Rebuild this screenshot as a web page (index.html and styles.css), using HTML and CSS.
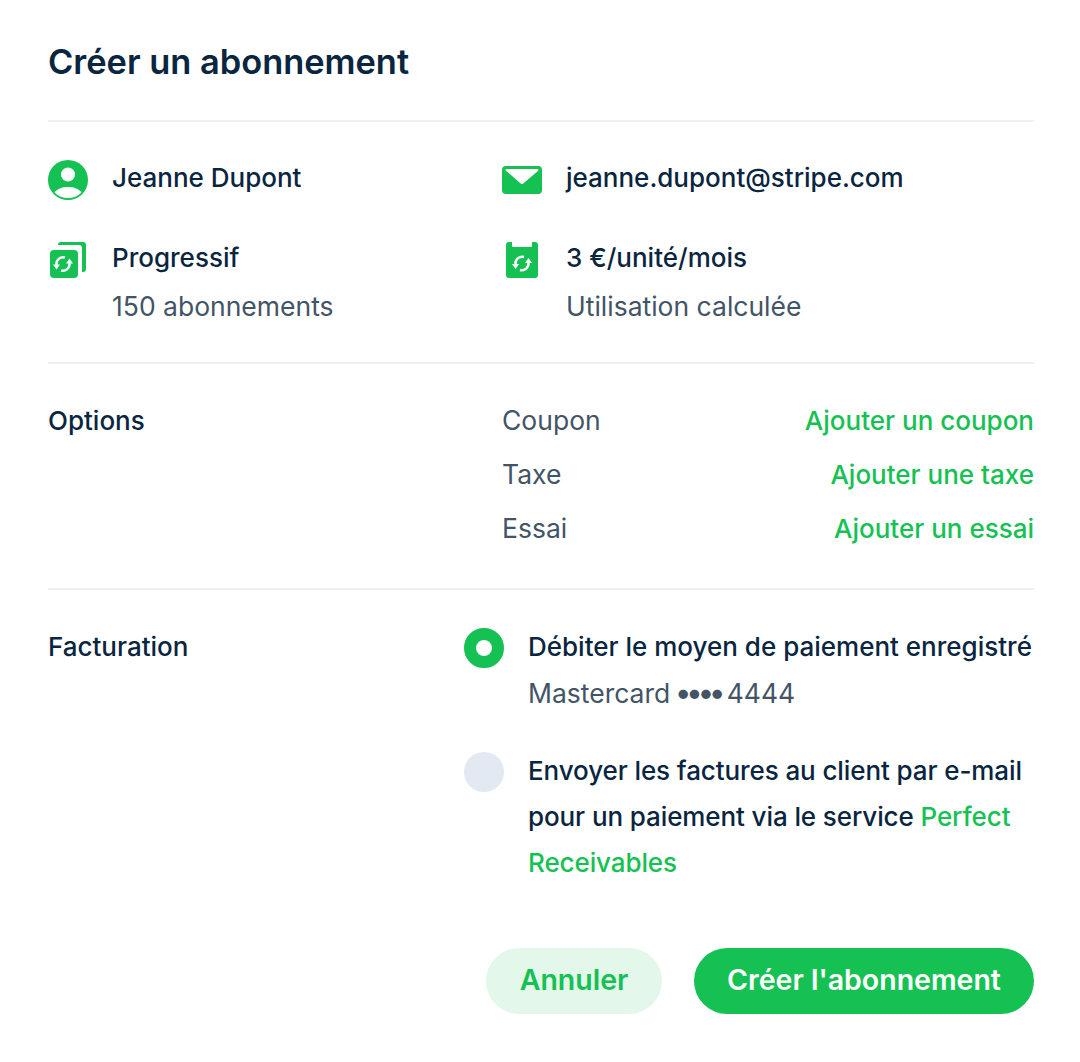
FILE: index.html
```html
<!DOCTYPE html>
<html lang="fr">
<head>
  <meta charset="UTF-8">
  <meta name="viewport" content="width=device-width, initial-scale=1.0">
  <title>Créer un abonnement</title>
  <link rel="stylesheet" href="styles.css">
</head>
<body>
  <div class="panel">
    <h1 class="panel-title">Créer un abonnement</h1>

    <!-- client et tarif -->
    <section class="section details">
      <div class="detail">
        <svg class="icon" width="40" height="40" viewBox="0 0 40 40">
          <circle cx="20" cy="20" r="20" fill="#16c153"/>
          <circle cx="20" cy="14.500" r="7" fill="#fff"/>
          <path d="M6.500 32.500C9 29 14 27 20 27s11 2 13.500 5.500C30 36.300 25 38 20 38S10 36.300 6.500 32.500Z" fill="#fff"/>
        </svg>
        <p class="strong">Jeanne Dupont</p>
      </div>
      <div class="detail">
        <svg class="icon" width="40" height="40" viewBox="0 0 40 40">
          <path d="M4 6h32a4 4 0 0 1 4 4v20a4 4 0 0 1-4 4H4a4 4 0 0 1-4-4V10a4 4 0 0 1 4-4Z" fill="#16c153"/>
          <path d="M4.500 9h31a1 1 0 0 1 .7 1.700L21.300 23.500a2 2 0 0 1-2.600 0L3.800 10.700A1 1 0 0 1 4.500 9Z" fill="#fff"/>
        </svg>
        <p class="strong">jeanne.dupont@stripe.com</p>
      </div>
      <div class="detail">
        <svg class="icon" width="40" height="40" viewBox="0 0 40 40">
          <path d="M10 5a3 3 0 0 1 3-3h22a3 3 0 0 1 3 3v24a3 3 0 0 1-3 3h-1V8a3 3 0 0 0-3-3Z" fill="#16c153"/>
          <rect x="2" y="10" width="28" height="28" rx="4" fill="#16c153"/>
          <g transform="translate(15 24)" fill="#fff">
            <path d="M2-6.500A6.800 6.800 0 0 0-6.500 1M-2 6.500A6.800 6.800 0 0 0 6.500-1" fill="none" stroke="#fff" stroke-width="2.400"/>
            <path d="M-10 .5h7l-3.500 5ZM10-.5H3l3.500-5Z"/>
          </g>
        </svg>
        <div>
          <p class="strong">Progressif</p>
          <p class="muted sub">150 abonnements</p>
        </div>
      </div>
      <div class="detail">
        <svg class="icon" width="40" height="40" viewBox="0 0 40 40">
          <path d="M7 2h3v4a1 1 0 0 0 1 1h18a1 1 0 0 0 1-1V2h3a3 3 0 0 1 3 3v30a3 3 0 0 1-3 3H7a3 3 0 0 1-3-3V5a3 3 0 0 1 3-3Z" fill="#16c153"/>
          <g transform="translate(20 23.500)" fill="#fff">
            <path d="M2-6.500A6.800 6.800 0 0 0-6.500 1M-2 6.500A6.800 6.800 0 0 0 6.500-1" fill="none" stroke="#fff" stroke-width="2.400"/>
            <path d="M-10 .5h7l-3.500 5ZM10-.5H3l3.500-5Z"/>
          </g>
        </svg>
        <div>
          <p class="strong">3 €/unité/mois</p>
          <p class="muted sub">Utilisation calculée</p>
        </div>
      </div>
    </section>

    <section class="section options">
      <p class="strong">Options</p>
      <div class="option-list">
        <div class="option"><span class="muted">Coupon</span><a class="link" href="#">Ajouter un coupon</a></div>
        <div class="option"><span class="muted">Taxe</span><a class="link" href="#">Ajouter une taxe</a></div>
        <div class="option"><span class="muted">Essai</span><a class="link" href="#">Ajouter un essai</a></div>
      </div>
    </section>

    <section class="section billing">
      <p class="strong">Facturation</p>
      <div class="choices">
        <div class="choice">
          <span class="radio radio-on"></span>
          <div>
            <p class="strong">Débiter le moyen de paiement enregistré</p>
            <p class="muted">Mastercard <span class="dots">••••</span> 4444</p>
          </div>
        </div>
        <div class="choice">
          <span class="radio"></span>
          <p class="strong tight">Envoyer les factures au client par e-mail pour un paiement via le service <a class="link" href="#">Perfect Receivables</a></p>
        </div>
      </div>
    </section>

    <div class="actions">
      <button class="btn btn-light">Annuler</button>
      <button class="btn btn-green">Créer l'abonnement</button>
    </div>
  </div>
</body>
</html>
```

FILE: styles.css
```css
* {
  box-sizing: border-box;
}
body {
  margin: 0;
  background-color: #ffffff;
  font-family: Inter, "Noto Sans", sans-serif;
  font-size: 26px;
  line-height: 46px;
  color: #0a2540;
}
p {
  margin: 0;
}
.panel {
  width: 1080px;
  padding: 0 46px 48px 48px;
}
.panel-title {
  margin: 0;
  height: 120px;
  padding-top: 38px;
  font-size: 34.4px;
  line-height: 48px;
  font-weight: 600;
}
.section {
  border-top: 2px solid #eef1f4;
  display: grid;
}
.strong {
  font-weight: 550;
}
.tight {
  letter-spacing: -0.1px;
}
.muted {
  color: #425466;
  font-weight: 400;
  font-size: 26.5px;
}
.dots {
  font-size: 30px;
  line-height: 0;
  letter-spacing: -5.5px;
  margin-left: -3px;
  margin-right: -1px;
}
.link {
  color: #16c153;
  font-weight: 550;
  text-decoration: none;
}
.details {
  grid-template-columns: 454px 1fr;
  row-gap: 34px;
  height: 242px;
  padding-top: 33px;
  align-content: start;
}
.detail {
  display: flex;
  gap: 24px;
}
.icon {
  flex: none;
  margin-top: 5px;
}
.sub {
  margin-top: 2px;
}
.options {
  grid-template-columns: 454px 1fr;
  height: 226px;
  padding-top: 34px;
}
.option {
  display: flex;
  justify-content: space-between;
  margin-bottom: 8px;
}
.option .muted {
  line-height: 44px;
}
.billing {
  grid-template-columns: 416px 1fr;
  padding-top: 34px;
}
.choice {
  display: flex;
  gap: 24px;
  margin-bottom: 32px;
}
.radio {
  flex: none;
  width: 40px;
  height: 40px;
  margin-top: 4px;
  border-radius: 50%;
  background-color: #e3e9f2;
}
.radio-on {
  border: 12px solid #16c153;
  background-clip: padding-box;
  background-color: #ffffff;
}
.actions {
  display: flex;
  justify-content: flex-end;
  gap: 32px;
  margin-top: 30px;
}
.btn {
  height: 66px;
  padding: 0 0 3px;
  border: 0;
  border-radius: 33px;
  font-family: inherit;
  font-size: 28.5px;
  font-weight: 600;
}
.btn-light {
  width: 176px;
  background-color: #e3f7ea;
  color: #16c153;
}
.btn-green {
  width: 340px;
  background-color: #16c153;
  color: #ffffff;
}
```
